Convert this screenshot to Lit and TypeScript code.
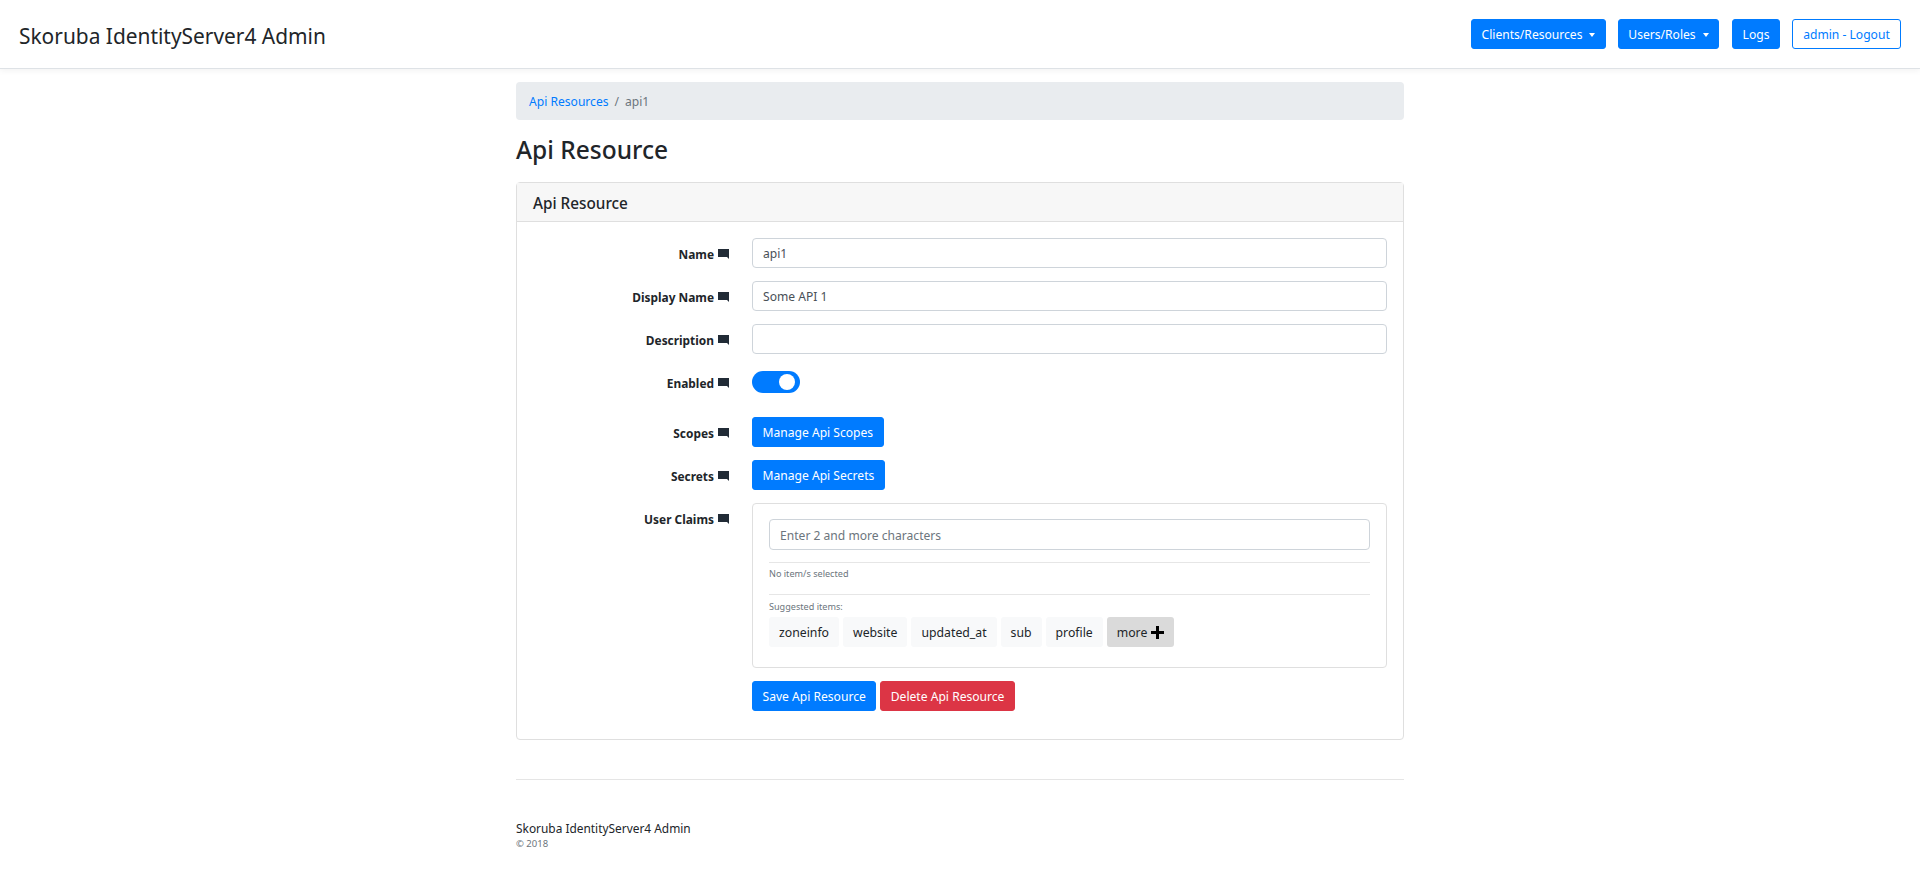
import { LitElement, html, css, svg } from "lit";
import { customElement } from "lit/decorators.js";

const commentIcon = html`<svg class="hint" viewBox="0 0 11 10" width="11" height="10">
  ${svg`<path d="M0 0H11V10L9 8H0Z" fill="#212b36" />`}
</svg>`;

const plusIcon = html`<svg class="plus" viewBox="0 0 13 13" width="13" height="13">
  ${svg`<path d="M5 0H8V5H13V8H8V13H5V8H0V5H5Z" fill="#000" />`}
</svg>`;

const TEXT_ROWS = [
  { label: "Name", value: "api1" },
  { label: "Display Name", value: "Some API 1" },
  { label: "Description", value: "" },
];

const SUGGESTED = ["zoneinfo", "website", "updated_at", "sub", "profile"];

@customElement("app-root")
export class AppRoot extends LitElement {
  static styles = css`
    * {
      box-sizing: border-box;
    }

    :host {
      display: block;
      font-family: "Noto Sans", "Open Sans", sans-serif;
      font-size: 12.1px;
      color: #212529;
      background: #fff;
      min-height: 874px;
    }

    .navbar {
      display: flex;
      align-items: center;
      height: 69px;
      padding: 0 19px;
      background: #fff;
      border-bottom: 1px solid #dee2e6;
      box-shadow: 0 2px 6px rgba(0, 0, 0, 0.05);
    }

    .brand {
      font-size: 20.9px;
      margin-right: auto;
      margin-top: 3px;
    }

    .nav-actions {
      display: flex;
      gap: 12px;
    }

    .btn {
      display: inline-flex;
      align-items: center;
      justify-content: center;
      height: 30px;
      padding-top: 1px;
      border: 1px solid #007bff;
      border-radius: 3px;
      background: #007bff;
      color: #fff;
      white-space: nowrap;
    }

    .btn.clients {
      width: 135px;
    }

    .btn.users {
      width: 101px;
    }

    .btn.logs {
      width: 48px;
      margin-left: 1px;
    }

    .btn.logout {
      width: 109px;
    }

    .btn.outline {
      background: #fff;
      color: #007bff;
    }

    .btn.danger {
      background: #dc3545;
      border-color: #dc3545;
    }

    .caret {
      width: 0;
      height: 0;
      margin-left: 7px;
      border-top: 4px solid #fff;
      border-left: 3.5px solid transparent;
      border-right: 3.5px solid transparent;
    }

    main {
      width: 888px;
      margin: 13px auto 0;
    }

    .breadcrumb {
      display: flex;
      align-items: center;
      gap: 6px;
      height: 38px;
      padding: 1px 13px 0;
      border-radius: 4px;
      background: #e9ecef;
      color: #6c757d;
    }

    .breadcrumb a {
      color: #007bff;
    }

    h2 {
      margin: 11px 0 13px;
      font-size: 24.5px;
      line-height: 38px;
      font-weight: 500;
    }

    .card {
      border: 1px solid #dfdfdf;
      border-radius: 4px;
    }

    .card-header {
      height: 39px;
      padding-left: 16px;
      line-height: 40px;
      font-size: 15.3px;
      font-weight: 500;
      background: #f7f7f7;
      border-bottom: 1px solid #dfdfdf;
    }

    .card-body {
      display: flex;
      flex-direction: column;
      gap: 13px;
      padding: 16px 16px 28px;
    }

    .row {
      display: grid;
      grid-template-columns: 196px 1fr;
      column-gap: 23px;
      align-items: start;
    }

    .label {
      display: flex;
      align-items: center;
      justify-content: flex-end;
      gap: 4px;
      height: 30px;
      padding-top: 1px;
      font-weight: 700;
      font-size: 11.9px;
    }

    .hint {
      flex: none;
      margin-top: 1px;
    }

    .input {
      display: flex;
      align-items: center;
      height: 30px;
      padding: 1px 10px 0;
      border: 1px solid #ced4da;
      border-radius: 4px;
      color: #495057;
      background: #fff;
    }

    .switch {
      position: relative;
      display: block;
      width: 48px;
      height: 22px;
      margin: 4px 0 11px;
      border-radius: 11px;
      background: #007bff;
    }

    .switch::after {
      content: "";
      position: absolute;
      top: 3px;
      right: 5px;
      width: 16px;
      height: 16px;
      border-radius: 50%;
      background: #fff;
    }

    .picker {
      padding: 15px 16px 20px;
      border: 1px solid #dfdfdf;
      border-radius: 4px;
    }

    .picker .input {
      height: 31px;
      color: #6c757d;
    }

    .picker hr {
      margin: 0;
      border: 0;
      border-top: 1px solid #e6e6e6;
    }

    .small {
      font-size: 9.1px;
      color: #6c757d;
      line-height: 14px;
    }

    .selected {
      margin-top: 12px;
    }

    .selected .small {
      padding: 4px 0 13px;
      height: 31px;
    }

    .suggested .small {
      padding: 5px 0 3px;
    }

    .chips {
      display: flex;
      gap: 4px;
    }

    .chip {
      display: flex;
      align-items: center;
      gap: 4px;
      height: 30px;
      padding: 1px 10px 0;
      border-radius: 3px;
      background: #f8f9fa;
      color: #212529;
      font-size: 12.25px;
    }

    .chip.more {
      background: #dadada;
    }

    .actions {
      display: flex;
      gap: 4px;
    }

    .actions .btn,
    .field-btn {
      padding: 1px 9.5px 0;
    }

    .footer {
      margin-top: 39px;
      padding-top: 40px;
      border-top: 1px solid #e5e5e5;
      font-size: 11.9px;
      line-height: 16px;
    }

    .footer .small {
      margin-top: 1px;
      font-size: 9.5px;
    }
  `;

  render() {
    return html`
      <nav class="navbar">
        <span class="brand">Skoruba IdentityServer4 Admin</span>
        <div class="nav-actions">
          <a class="btn clients">Clients/Resources<span class="caret"></span></a>
          <a class="btn users">Users/Roles<span class="caret"></span></a>
          <a class="btn logs">Logs</a>
          <a class="btn outline logout">admin - Logout</a>
        </div>
      </nav>
      <main>
        <div class="breadcrumb">
          <a>Api Resources</a><span>/</span><span>api1</span>
        </div>
        <h2>Api Resource</h2>
        <section class="card">
          <div class="card-header">Api Resource</div>
          <div class="card-body">
            ${TEXT_ROWS.map(
              (r) => html`<div class="row">
                <div class="label">${r.label}${commentIcon}</div>
                <div class="input">${r.value}</div>
              </div>`
            )}
            <div class="row">
              <div class="label">Enabled${commentIcon}</div>
              <span class="switch"></span>
            </div>
            <div class="row">
              <div class="label">Scopes${commentIcon}</div>
              <div><a class="btn field-btn">Manage Api Scopes</a></div>
            </div>
            <div class="row">
              <div class="label">Secrets${commentIcon}</div>
              <div><a class="btn field-btn">Manage Api Secrets</a></div>
            </div>
            <div class="row">
              <div class="label">User Claims${commentIcon}</div>
              <div class="picker">
                <div class="input">Enter 2 and more characters</div>
                <div class="selected">
                  <hr />
                  <div class="small">No item/s selected</div>
                </div>
                <div class="suggested">
                  <hr />
                  <div class="small">Suggested items:</div>
                  <div class="chips">
                    ${SUGGESTED.map((s) => html`<span class="chip">${s}</span>`)}
                    <span class="chip more">more${plusIcon}</span>
                  </div>
                </div>
              </div>
            </div>
            <div class="row">
              <div></div>
              <div class="actions">
                <a class="btn">Save Api Resource</a>
                <a class="btn danger">Delete Api Resource</a>
              </div>
            </div>
          </div>
        </section>
        <footer class="footer">
          <div>Skoruba IdentityServer4 Admin</div>
          <div class="small">© 2018</div>
        </footer>
      </main>
    `;
  }
}
